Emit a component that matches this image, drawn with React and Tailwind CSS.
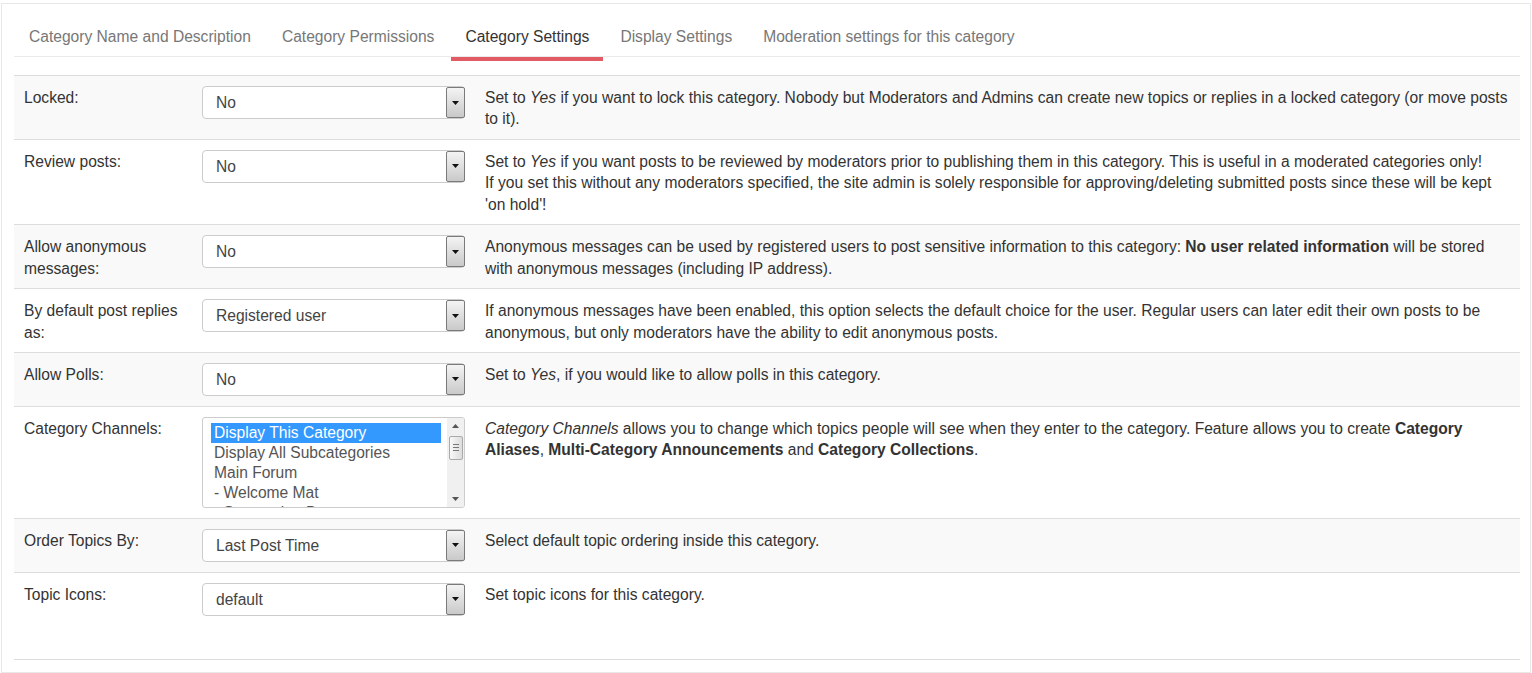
import React from 'react';

const tabs = [
    'Category Name and Description',
    'Category Permissions',
    'Category Settings',
    'Display Settings',
    'Moderation settings for this category',
];

// Classic windows-style dropdown button inside the select
function DropButton() {
    return (
        <div className="w-[19px] shrink-0 -mr-[1px] border border-[#7a7a7a] rounded-[2px] bg-gradient-to-b from-[#f4f4f4] to-[#c9c9c9] flex items-center justify-center">
            <svg width="7" height="4" viewBox="0 0 7 4">
                <path d="M0 0h7L3.5 4z" fill="#111" />
            </svg>
        </div>
    );
}

function Select({ value }) {
    return (
        <div className="flex h-[33px] w-[263px] items-stretch border border-[#ccc] rounded-[4px] bg-white">
            <div className="flex-1 pl-[13px] flex items-center text-[#444] leading-[20px] pt-[1px]">{value}</div>
            <DropButton />
        </div>
    );
}

function ListBox() {
    const items = [
        'Display This Category',
        'Display All Subcategories',
        'Main Forum',
        '- Welcome Mat',
        '- Suggestion Box',
    ];
    return (
        <div className="flex h-[91px] w-[263px] border border-[#ccc] rounded-[3px] bg-white overflow-hidden">
            <div className="flex-1 pl-[8px] pr-[6px] pt-[5px] overflow-hidden">
                {items.map((it, i) => (
                    <div
                        key={it}
                        className={
                            i === 0
                                ? 'bg-[#3399ff] text-white leading-[20px] pl-[3px] whitespace-nowrap'
                                : 'text-[#555] leading-[20px] pl-[3px] whitespace-nowrap'
                        }
                    >
                        {it}
                    </div>
                ))}
            </div>
            {/* scrollbar */}
            <div className="w-[17px] bg-[#f0f0f0] flex flex-col items-center">
                <div className="h-[16px] flex items-center justify-center">
                    <svg width="7" height="4" viewBox="0 0 7 4"><path d="M0 4h7L3.5 0z" fill="#555" /></svg>
                </div>
                <div className="mt-[2px] w-[14px] h-[24px] border border-[#aaa] rounded-[2px] bg-gradient-to-r from-[#f8f8f8] to-[#dcdcdc] flex flex-col items-center justify-center gap-[2px]">
                    <div className="w-[6px] h-[1px] bg-[#777]" />
                    <div className="w-[6px] h-[1px] bg-[#777]" />
                    <div className="w-[6px] h-[1px] bg-[#777]" />
                </div>
                <div className="flex-1" />
                <div className="h-[16px] flex items-center justify-center">
                    <svg width="7" height="4" viewBox="0 0 7 4"><path d="M0 0h7L3.5 4z" fill="#555" /></svg>
                </div>
            </div>
        </div>
    );
}

const rows = [
    {
        label: 'Locked:',
        control: <Select value="No" />,
        desc: (
            <>
                Set to <i>Yes</i> if you want to lock this category. Nobody but Moderators and Admins can create new topics or replies in a locked category (or move posts to it).
            </>
        ),
    },
    {
        label: 'Review posts:',
        control: <Select value="No" />,
        desc: (
            <>
                Set to <i>Yes</i> if you want posts to be reviewed by moderators prior to publishing them in this category. This is useful in a moderated categories only!
                <br />
                If you set this without any moderators specified, the site admin is solely responsible for approving/deleting submitted posts since these will be kept 'on hold'!
            </>
        ),
    },
    {
        label: 'Allow anonymous messages:',
        control: <Select value="No" />,
        desc: (
            <>
                Anonymous messages can be used by registered users to post sensitive information to this category: <b>No user related information</b> will be stored with anonymous messages (including IP address).
            </>
        ),
    },
    {
        label: 'By default post replies as:',
        control: <Select value="Registered user" />,
        desc: (
            <>
                If anonymous messages have been enabled, this option selects the default choice for the user. Regular users can later edit their own posts to be anonymous, but only moderators have the ability to edit anonymous posts.
            </>
        ),
    },
    {
        label: 'Allow Polls:',
        control: <Select value="No" />,
        desc: (
            <>
                Set to <i>Yes</i>, if you would like to allow polls in this category.
            </>
        ),
    },
    {
        label: 'Category Channels:',
        control: <ListBox />,
        desc: (
            <>
                <i>Category Channels</i> allows you to change which topics people will see when they enter to the category. Feature allows you to create <b>Category Aliases</b>, <b>Multi-Category Announcements</b> and <b>Category Collections</b>.
            </>
        ),
    },
    {
        label: 'Order Topics By:',
        control: <Select value="Last Post Time" />,
        desc: <>Select default topic ordering inside this category.</>,
    },
    {
        label: 'Topic Icons:',
        control: <Select value="default" />,
        desc: <>Set topic icons for this category.</>,
        tall: true,
    },
];

export default function App() {
    return (
        <div
            className="min-h-screen bg-white text-[#333] text-[15.6px] leading-[21.43px]"
            style={{ fontFamily: '"Liberation Sans", Arial, sans-serif' }}
        >
            <div className="ml-[1px] mt-[3px] w-[1530px] h-[670px] border border-[#e8e8e8] pl-[12px] pr-[10px] pt-[12px]">
                {/* Tabs */}
                <div className="flex gap-[3px] pl-[1px] h-[41px] border-b border-[#eaeaea]">
                    {tabs.map((t) => {
                        const active = t === 'Category Settings';
                        return (
                            <div key={t} className="relative px-[14px] pt-[10px]">
                                <span className={active ? 'text-[#333]' : 'text-[#777]'}>{t}</span>
                                {active && (
                                    <span className="absolute left-0 right-0 -bottom-[5px] h-[4px] bg-[#e25b64]" />
                                )}
                            </div>
                        );
                    })}
                </div>

                {/* Settings table */}
                <div className="mt-[18px] border-b border-[#ddd]">
                    {rows.map((r, i) => (
                        <div
                            key={r.label}
                            className={`grid grid-cols-[178px_283px_1fr] border-t border-[#ddd] ${
                                i % 2 === 0 ? 'bg-[#f9f9f9]' : 'bg-white'
                            } ${r.tall ? 'h-[87px]' : ''}`}
                        >
                            <div className="px-[10px] pt-[11px] pb-[9px]">{r.label}</div>
                            <div className="px-[10px] pt-[10px] pb-[10px]">{r.control}</div>
                            <div className="px-[10px] pt-[11px] pb-[9px]">{r.desc}</div>
                        </div>
                    ))}
                </div>
            </div>
        </div>
    );
}
